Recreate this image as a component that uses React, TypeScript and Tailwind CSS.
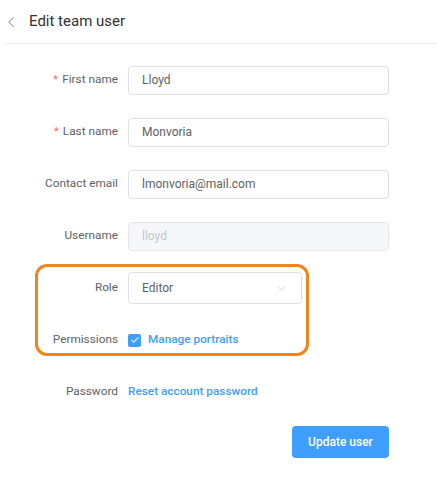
import { ChevronLeft, ChevronDown, Check } from 'lucide-react';

function Row({ label, required, children }: { label: string; required?: boolean; children: React.ReactNode }) {
  return (
    <div className="flex items-center h-[30px]">
      <div className="w-[118px] text-right text-[11.8px] text-[#606266] shrink-0">
        {required && <span className="text-[#f56c6c] mr-[4px]">*</span>}
        {label}
      </div>
      <div className="ml-[10px] flex items-center">{children}</div>
    </div>
  );
}

function TextInput({ value, disabled }: { value: string; disabled?: boolean }) {
  return (
    <div
      className={
        disabled
          ? 'w-[261px] h-[29px] flex items-center px-[13px] rounded border border-[#e4e7ed] bg-[#f5f7fa] text-[12px] text-[#c0c4cc]'
          : 'w-[261px] h-[29px] flex items-center px-[13px] rounded border border-[#dcdfe6] bg-white text-[12px] text-[#606266]'
      }
    >
      {value}
    </div>
  );
}

export default function App() {
  return (
    <div className="w-[437px] h-[493px] bg-white font-['Roboto',sans-serif]">
      {/* 顶部标题 */}
      <div className="h-[44px] flex items-center border-b border-[#f0f0f0] ml-[3px]">
        <ChevronLeft size={18} strokeWidth={1.1} className="text-[#606266] -ml-[1px]" />
        <span className="ml-[9px] text-[15px] text-[#303133]">Edit team user</span>
      </div>

      <div className="pt-[21px] flex flex-col gap-[22px]">
        <Row label="First name" required>
          <TextInput value="Lloyd" />
        </Row>
        <Row label="Last name" required>
          <TextInput value="Monvoria" />
        </Row>
        <Row label="Contact email">
          <TextInput value="lmonvoria@mail.com" />
        </Row>
        <Row label="Username">
          <TextInput value="lloyd" disabled />
        </Row>

        {/* 标注框 */}
        <div className="relative flex flex-col gap-[22px]">
          <div className="absolute left-[35px] w-[274px] -top-[9px] -bottom-[1px] border-[3px] border-[#f0861a] rounded-[12px] pointer-events-none" />
          <Row label="Role">
            <div className="w-[174px] h-[32px] flex items-center justify-between px-[13px] rounded border border-[#dcdfe6] bg-white text-[12px] text-[#606266]">
              <span>Editor</span>
              <ChevronDown size={13} strokeWidth={1.3} className="text-[#c0c4cc]" />
            </div>
          </Row>
          <Row label="Permissions">
            <div className="flex items-center">
              <span className="w-[13px] h-[13px] rounded-[2px] bg-[#409eff] flex items-center justify-center">
                <Check size={10} strokeWidth={2.5} className="text-white" />
              </span>
              <span className="ml-[7px] text-[11.8px] font-medium text-[#409eff]">Manage portraits</span>
            </div>
          </Row>
        </div>

        <Row label="Password">
          <span className="text-[11.8px] font-medium text-[#409eff]">Reset account password</span>
        </Row>

        <div className="flex justify-end w-[389px] -mt-[3px]">
          <button className="w-[97px] h-[32px] rounded bg-[#409eff] text-white text-[12px] font-medium">Update user</button>
        </div>
      </div>
    </div>
  );
}
